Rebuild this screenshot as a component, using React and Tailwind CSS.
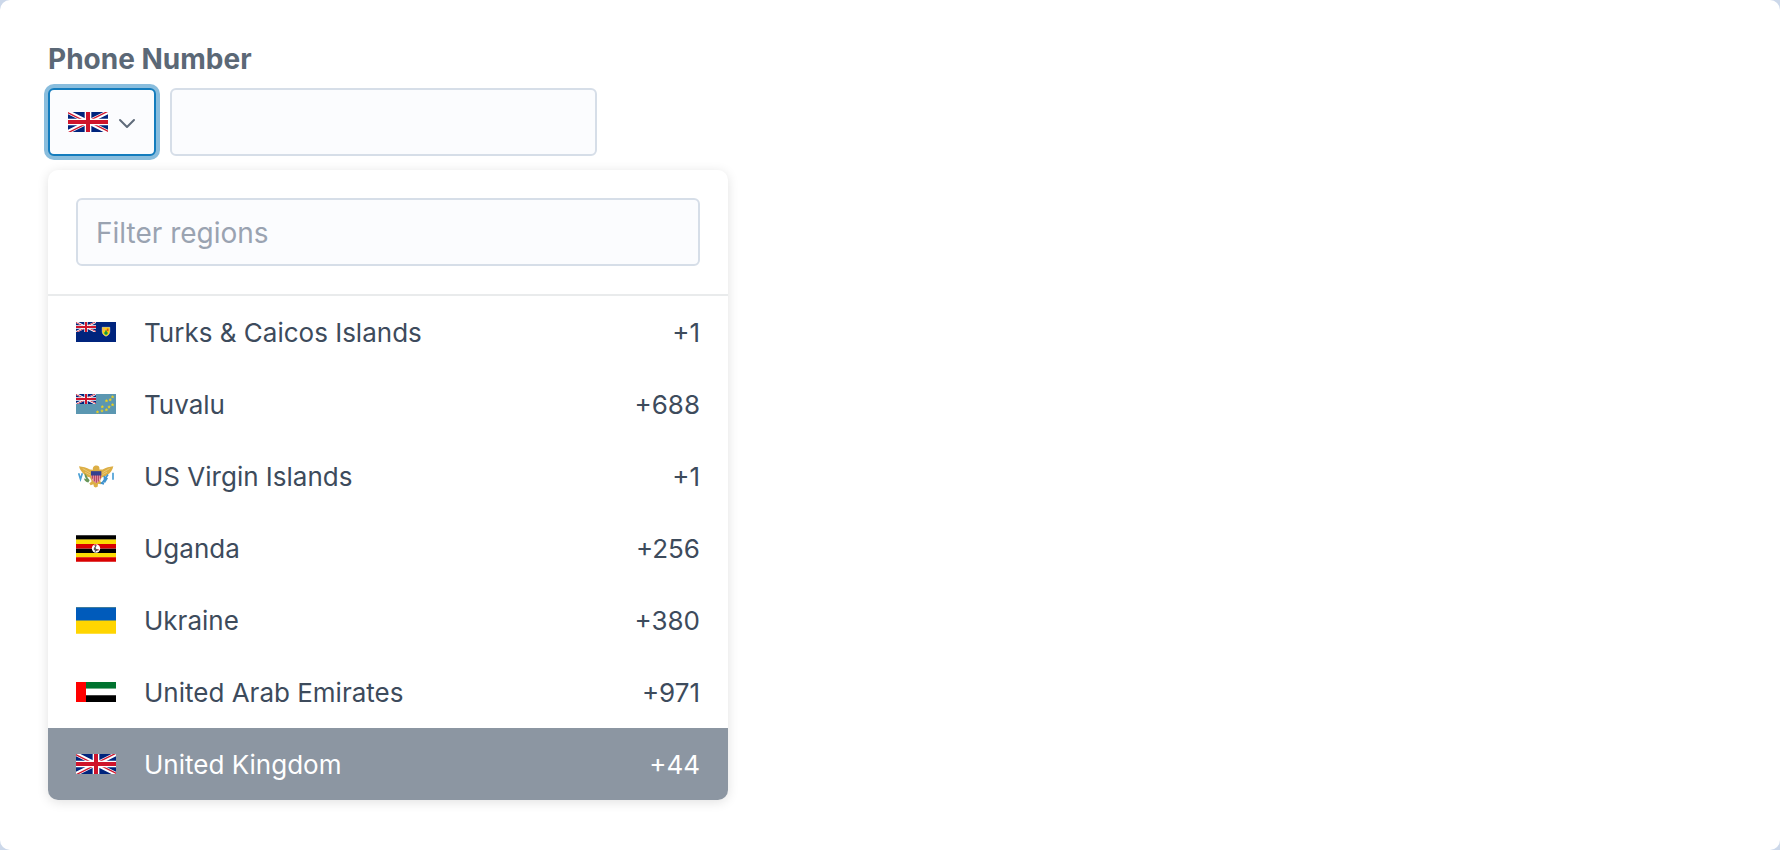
import { useId, useState } from 'react';

function UnionJack() {
  const id = useId();
  return (
    <>
      <clipPath id={id}>
        <path d="M30 15h30v15zM30 15v15H0zM30 15H0V0zM30 15V0h30z" />
      </clipPath>
      <path fill="#00247d" d="M0 0h60v30H0z" />
      <path stroke="#fff" strokeWidth="6" d="M0 0l60 30M60 0L0 30" />
      <path stroke="#cf142b" strokeWidth="4" clipPath={`url(#${id})`} d="M0 0l60 30M60 0L0 30" />
      <path stroke="#fff" strokeWidth="10" d="M30 0v30M0 15h60" />
      <path stroke="#cf142b" strokeWidth="6" d="M30 0v30M0 15h60" />
    </>
  );
}

function FlagGB() {
  return (
    <svg viewBox="0 0 60 30" className="h-5 w-10 shrink-0" aria-hidden="true">
      <UnionJack />
    </svg>
  );
}

function FlagTC() {
  return (
    <svg viewBox="0 0 40 20" className="h-5 w-10 shrink-0" aria-hidden="true">
      <path fill="#00247d" d="M0 0h40v20H0z" />
      <svg width="20" height="10" viewBox="0 0 60 30">
        <UnionJack />
      </svg>
      <path d="M26.200 5.300h7.600v4.200c0 2.400-1.700 3.900-3.800 4.800-2.100-.9-3.800-2.400-3.800-4.800z" fill="#ffd100" stroke="#fff" strokeWidth=".4" />
      <path d="M27.300 6.600h1.800v2h-1.800z" fill="#f3a089" />
      <path d="M30.800 6.600h1.700v2.600h-1.700z" fill="#d9541e" />
      <path d="M28.200 10.200h3.600v1.200L30 13.300l-1.800-1.800z" fill="#00a651" />
      <path d="M29.200 8.600h1.600v3.200h-1.600z" fill="#1b8a3a" />
    </svg>
  );
}

const TUVALU_STARS = [
  [36.6, 2.9], [34.2, 5.7], [30.5, 6.8], [36.6, 10.8], [33.1, 13],
  [26.3, 12.8], [30.4, 15.8], [26, 16.9], [21.5, 18],
];

function FlagTV() {
  return (
    <svg viewBox="0 0 40 20" className="h-5 w-10 shrink-0" aria-hidden="true">
      <path fill="#5b97b1" d="M0 0h40v20H0z" />
      <svg width="20" height="10" viewBox="0 0 60 30">
        <UnionJack />
      </svg>
      {TUVALU_STARS.map(([x, y]) => (
        <path
          key={`${x}-${y}`}
          transform={`translate(${x} ${y})`}
          fill="#f7d917"
          d="M0-1.500.4-.5 1.400-.5.6.2 1 1.200 0 .7-1 1.200-.6.2-1.400-.5-.4-.5z"
          stroke="#f0cf1a"
          strokeWidth=".3"
        />
      ))}
    </svg>
  );
}

function FlagVI() {
  return (
    <svg viewBox="0 0 120 80" className="h-[27px] w-10 shrink-0" aria-hidden="true">
      <path fill="#fff" d="M0 0h120v80H0z" />
      <path fill="none" stroke="#4a9fd4" strokeWidth="5" d="M8 30l5.500 18L19 30M111 29v21" />
      <path
        fill="#dcae45"
        d="M9 9c11 1 23 4 33 10l9 1c-2-8 3-13 10-13s11 5 9 12l10 0c9-6 21-9 32-10-2 11-8 19-16 25-6 5-12 8-19 9l-5 11 7 4-5 5-8-1-1 9-6 2-5-2-2-8-8 3-4-5 7-7-5-11c-7-1-12-4-17-9C18 27 11 19 9 9z"
      />
      <path fill="none" stroke="#f1d68d" strokeWidth="2" d="M20 16l22 13M27 27l15 8M101 16L79 29M93 27l-14 8" />
      <path fill="#e9a8b4" d="M45 28h31c0 16-3 26-15.500 32C48 54 45 44 45 28z" />
      <path fill="none" stroke="#b5405e" strokeWidth="3.500" d="M49 30v17M55 30v25M61 30v29M67 30v25M73 30v16" />
      <path fill="#34408f" d="M45 24h31v13H45z" />
      <path fill="#69965a" d="M26 30c4 5 8 9 9 14l6 7-4 7c-8-1-12-6-13-12 3 1 5 1 7 2-4-6-6-11-5-18z" />
      <path fill="none" stroke="#3f93cf" strokeWidth="5" d="M96 34L78 60M85 38l1 16M94 44l-9 14M74 59l10 3" />
    </svg>
  );
}

function FlagUG() {
  return (
    <svg viewBox="0 0 120 80" className="h-[27px] w-10 shrink-0" aria-hidden="true">
      <path fill="#000" d="M0 0h120v13.400H0zM0 40h120v13.400H0z" />
      <path fill="#fcdc04" d="M0 13.300h120v13.400H0zM0 53.300h120v13.400H0z" />
      <path fill="#d90000" d="M0 26.600h120V40H0zM0 66.600h120V80H0z" />
      <circle cx="60" cy="40" r="12.500" fill="#fff" />
      <path fill="#555" d="M56 31l5-2 1 3-3 4 1 5 7 2-3 4-5 1v3h-3l1-4-4-4 1-5 3-3z" />
      <path fill="#d90000" d="M54 30l4-3 2 2-3 2zM65 42l5 2-5 3z" />
    </svg>
  );
}

function FlagUA() {
  return (
    <svg viewBox="0 0 120 80" className="h-[27px] w-10 shrink-0" aria-hidden="true">
      <path fill="#ffd500" d="M0 0h120v80H0z" />
      <path fill="#005bbb" d="M0 0h120v40H0z" />
    </svg>
  );
}

function FlagAE() {
  return (
    <svg viewBox="0 0 120 60" className="h-5 w-10 shrink-0" aria-hidden="true">
      <path fill="#00732f" d="M0 0h120v20H0z" />
      <path fill="#fff" d="M0 20h120v20H0z" />
      <path fill="#000" d="M0 40h120v20H0z" />
      <path fill="#f00" d="M0 0h30v60H0z" />
    </svg>
  );
}

const REGIONS = [
  { name: 'Turks & Caicos Islands', code: '+1', Flag: FlagTC },
  { name: 'Tuvalu', code: '+688', Flag: FlagTV },
  { name: 'US Virgin Islands', code: '+1', Flag: FlagVI },
  { name: 'Uganda', code: '+256', Flag: FlagUG },
  { name: 'Ukraine', code: '+380', Flag: FlagUA },
  { name: 'United Arab Emirates', code: '+971', Flag: FlagAE },
  { name: 'United Kingdom', code: '+44', Flag: FlagGB },
];

const FIELD = 'h-[68px] rounded-md border-2 border-[#d6dee8] bg-[#fbfcfe] px-[18px] pt-0.5 text-[28px] text-[#3d4b5c] outline-none';

export default function App() {
  const [selected, setSelected] = useState('United Kingdom');
  const [query, setQuery] = useState('');
  const current = REGIONS.find((region) => region.name === selected);
  const visible = REGIONS.filter((region) => region.name.toLowerCase().includes(query.toLowerCase()));

  return (
    <div className="bg-[#ccd8ea] font-['Inter','Liberation_Sans',sans-serif]">
      <main className="min-h-screen rounded-[10px] bg-white px-12 pt-10 pb-12">
        <label htmlFor="phone" className="block text-[28px] leading-[38px] font-bold text-[#5b6876]">
          Phone Number
        </label>
        <div className="mt-2.5 flex max-w-[549px] gap-3.5">
          <button
            type="button"
            aria-label="Select region"
            aria-expanded="true"
            className="flex h-[68px] w-[108px] shrink-0 items-center gap-2.5 rounded-md border-2 border-[#137cbd] bg-[#fbfcfe] px-[18px] ring-4 ring-[#89bddd]"
          >
            <current.Flag />
            <svg viewBox="0 0 18 18" className="size-[18px] shrink-0" aria-hidden="true">
              <path d="M2 7l7 7 7-7" fill="none" stroke="#5f6b7a" strokeWidth="2" strokeLinecap="round" strokeLinejoin="round" />
            </svg>
          </button>
          <input id="phone" type="tel" className={`min-w-0 flex-1 ${FIELD}`} />
        </div>

        <div className="mt-3.5 max-w-[680px] overflow-hidden rounded-[10px] bg-white shadow-[0_2px_12px_rgba(0,0,0,0.12)]">
          <div className="border-b-2 border-[#e9ebec] p-7">
            <input
              type="text"
              aria-label="Filter regions"
              placeholder="Filter regions"
              value={query}
              onChange={(event) => setQuery(event.target.value)}
              className={`block w-full placeholder:text-[#9aa3b1] ${FIELD}`}
            />
          </div>
          <ul>
            {visible.map(({ name, code, Flag }) => (
              <li key={name}>
                <button
                  type="button"
                  aria-pressed={name === selected}
                  onClick={() => setSelected(name)}
                  className={`flex h-[72px] w-full items-center gap-7 px-7 text-left text-[26px] ${
                    name === selected ? 'bg-[#8c96a2] text-white' : 'text-[#3d4b5c]'
                  }`}
                >
                  <Flag />
                  <span className="flex-1">{name}</span>
                  <span>{code}</span>
                </button>
              </li>
            ))}
          </ul>
        </div>
      </main>
    </div>
  );
}
